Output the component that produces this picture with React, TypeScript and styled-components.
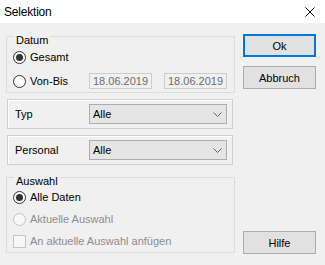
import styled, { createGlobalStyle } from "styled-components";

const GlobalStyle = createGlobalStyle`
  html, body {
    margin: 0;
    padding: 0;
    background: #f0f0f0;
    overflow: hidden;
  }
  body {
    font-family: "Liberation Sans", Arial, sans-serif;
    font-size: 11px;
    color: #000;
  }
`;

const Window = styled.div`
  width: 325px;
  height: 265px;
  display: flex;
  flex-direction: column;
  background: #f0f0f0;
`;

const TitleBar = styled.div`
  height: 23px;
  flex: none;
  background: #fff;
  display: flex;
  align-items: center;
  justify-content: space-between;
  padding: 0 10px 0 4px;
`;

const Title = styled.span`
  font-size: 12px;
  letter-spacing: -0.2px;
  color: #000;
`;

const CloseIcon = styled.svg`
  display: block;
  width: 10px;
  height: 10px;
`;

const Body = styled.div`
  flex: 1;
  display: flex;
  padding: 0 9px 0 6px;
`;

const LeftColumn = styled.div`
  width: 229px;
  display: flex;
  flex-direction: column;
`;

const Group = styled.fieldset<{ $top: number }>`
  margin: ${(p) => p.$top}px 0 0;
  padding: 4px 6px 1px;
  border: 1px solid #dcdcdc;
  min-width: 0;
`;

const Legend = styled.legend`
  margin-left: 1px;
  padding: 0 2px;
  line-height: 14px;
  transform: translateY(4px);
`;

const Row = styled.div<{ $h: number }>`
  height: ${(p) => p.$h}px;
  display: flex;
  align-items: center;
`;

const OptionLabel = styled.label<{ $width?: number; $disabled?: boolean }>`
  display: flex;
  align-items: center;
  gap: 4px;
  width: ${(p) => (p.$width ? `${p.$width}px` : "auto")};
  color: ${(p) => (p.$disabled ? "#8d8d8d" : "#000")};
`;

const Radio = styled.span<{ $checked?: boolean; $disabled?: boolean }>`
  width: 13px;
  height: 13px;
  box-sizing: border-box;
  border-radius: 50%;
  border: 1px solid ${(p) => (p.$disabled ? "#c4c4c4" : "#333")};
  background: ${(p) => (p.$disabled ? "#f7f7f7" : "#fff")};
  display: flex;
  align-items: center;
  justify-content: center;

  &::after {
    content: "";
    display: ${(p) => (p.$checked ? "block" : "none")};
    width: 7px;
    height: 7px;
    border-radius: 50%;
    background: #333;
  }
`;

const CheckBox = styled.span<{ $disabled?: boolean }>`
  width: 13px;
  height: 13px;
  box-sizing: border-box;
  border: 1px solid ${(p) => (p.$disabled ? "#c4c4c4" : "#333")};
  background: ${(p) => (p.$disabled ? "#f7f7f7" : "#fff")};
`;

const DateField = styled.div`
  width: 63px;
  height: 16px;
  box-sizing: border-box;
  border: 1px solid #cccccc;
  background: #f0f0f0;
  color: #6d6d6d;
  line-height: 14px;
  padding: 0 3px;
  margin-right: 12px;

  &:last-child {
    margin-right: 0;
  }
`;

const Frame = styled.div`
  height: 30px;
  box-sizing: border-box;
  margin: 6px 2px 0 1px;
  padding: 0 5px 0 7px;
  border: 1px solid #cfcfcf;
  box-shadow: inset 1px 1px 0 #fff;
  display: flex;
  align-items: center;
`;

const FrameLabel = styled.span`
  width: 74px;
`;

const Combo = styled.div`
  width: 138px;
  height: 20px;
  box-sizing: border-box;
  border: 1px solid #adadad;
  background: #e5e5e5;
  display: flex;
  align-items: center;
  justify-content: space-between;
  padding: 0 4px 0 3px;
`;

const Chevron = styled.svg`
  display: block;
  width: 9px;
  height: 5px;
`;

const ButtonColumn = styled.div`
  width: 73px;
  margin-left: 8px;
  padding: 11px 0;
  display: flex;
  flex-direction: column;
  gap: 9px;
`;

const Button = styled.button<{ $default?: boolean; $bottom?: boolean }>`
  width: 73px;
  height: 23px;
  box-sizing: border-box;
  margin: ${(p) => (p.$bottom ? "auto 0 0" : "0")};
  padding: 0;
  font-family: "Liberation Sans", Arial, sans-serif;
  font-size: 11px;
  color: #000;
  background: #e1e1e1;
  border: 1px solid ${(p) => (p.$default ? "#0078d7" : "#adadad")};
  box-shadow: ${(p) => (p.$default ? "inset 0 0 0 1px #0078d7" : "none")};
`;

const DropDown = ({ label }: { label: string }) => (
  <Frame>
    <FrameLabel>{label}</FrameLabel>
    <Combo>
      <span>Alle</span>
      <Chevron viewBox="0 0 9 5">
        <polyline points="0.5,0.5 4.5,4.5 8.5,0.5" fill="none" stroke="#606060" strokeWidth="1" />
      </Chevron>
    </Combo>
  </Frame>
);

const App = () => {
  return (
    <Window>
      <GlobalStyle />
      <TitleBar>
        <Title>Selektion</Title>
        <CloseIcon viewBox="0 0 10 10">
          <path d="M0.5 0.5 L9.5 9.5 M9.5 0.5 L0.5 9.5" stroke="#000" strokeWidth="1" />
        </CloseIcon>
      </TitleBar>

      <Body>
        <LeftColumn>
          <Group $top={6}>
            <Legend>Datum</Legend>
            <Row $h={20}>
              <OptionLabel>
                <Radio $checked />
                Gesamt
              </OptionLabel>
            </Row>
            <Row $h={20} style={{ marginTop: 4 }}>
              <OptionLabel $width={76}>
                <Radio />
                Von-Bis
              </OptionLabel>
              <DateField>18.06.2019</DateField>
              <DateField>18.06.2019</DateField>
            </Row>
          </Group>

          <DropDown label="Typ" />
          <DropDown label="Personal" />

          <Group $top={5} style={{ padding: "2px 6px 0" }}>
            <Legend>Auswahl</Legend>
            <Row $h={22}>
              <OptionLabel>
                <Radio $checked />
                Alle Daten
              </OptionLabel>
            </Row>
            <Row $h={22}>
              <OptionLabel $disabled>
                <Radio $disabled />
                Aktuelle Auswahl
              </OptionLabel>
            </Row>
            <Row $h={22}>
              <OptionLabel $disabled>
                <CheckBox $disabled />
                An aktuelle Auswahl anfügen
              </OptionLabel>
            </Row>
          </Group>
        </LeftColumn>

        <ButtonColumn>
          <Button $default>Ok</Button>
          <Button>Abbruch</Button>
          <Button $bottom>Hilfe</Button>
        </ButtonColumn>
      </Body>
    </Window>
  );
};

export default App;
